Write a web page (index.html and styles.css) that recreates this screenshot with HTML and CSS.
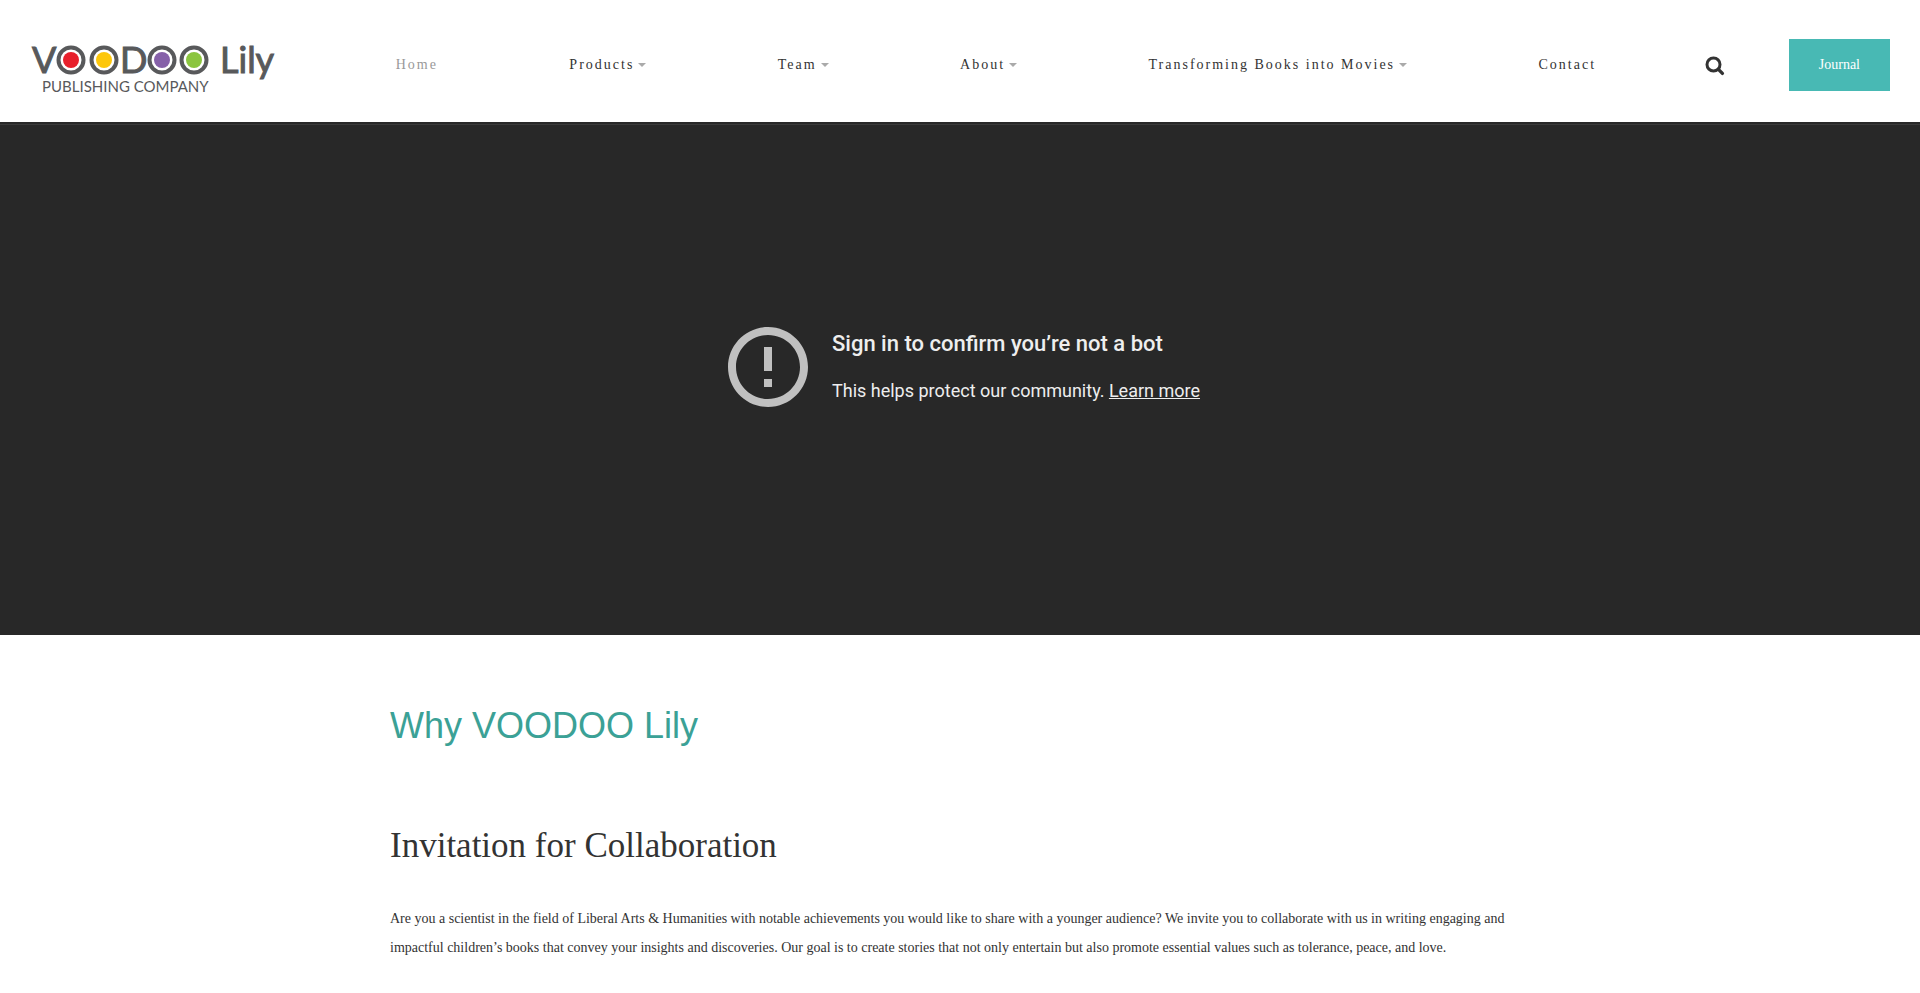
FILE: index.html
```html
<!DOCTYPE html>
<html lang="en">
<head>
<meta charset="UTF-8">
<meta name="viewport" content="width=device-width, initial-scale=1.0">
<title>VOODOO Lily Publishing Company</title>
<link rel="stylesheet" href="styles.css">
</head>
<body>
    <header class="header">
        <a class="logo" href="#" aria-label="VOODOO Lily Publishing Company">
            <svg width="246" height="52" viewBox="0 0 246 52">
                <g class="logo-name">
                    <text x="2" y="34">V</text>
                    <text x="90" y="34">D</text>
                    <text x="190" y="34">Lily</text>
                </g>
                <g fill="none" stroke="#58595b" stroke-width="4">
                    <circle cx="41" cy="21" r="12.5"/>
                    <circle cx="74" cy="21" r="12.5"/>
                    <circle cx="132" cy="21" r="12.5"/>
                    <circle cx="164" cy="21" r="12.5"/>
                </g>
                <circle cx="41" cy="21" r="8" fill="#e8202c"/>
                <circle cx="74" cy="21" r="8" fill="#fdc70c"/>
                <circle cx="132" cy="21" r="8" fill="#8661a9"/>
                <circle cx="164" cy="21" r="8" fill="#8bc53f"/>
                <text class="logo-sub" x="12" y="53">PUBLISHING COMPANY</text>
            </svg>
        </a>
        <nav class="nav">
            <a class="active" href="#">Home</a>
            <a class="has-menu" href="#">Products</a>
            <a class="has-menu" href="#">Team</a>
            <a class="has-menu" href="#">About</a>
            <a class="has-menu" href="#">Transforming Books into Movies</a>
            <a href="#">Contact</a>
        </nav>
        <button class="search" type="button" aria-label="Search">
            <svg width="20" height="20" viewBox="0 0 20 20" fill="none" stroke="#333">
                <circle cx="8.5" cy="8.5" r="6.5" stroke-width="3"/>
                <path d="M13.4 13.4L17.4 17.4" stroke-width="3.4" stroke-linecap="round"/>
            </svg>
        </button>
        <a class="journal" href="#">Journal</a>
    </header>

    <section class="video">
        <div class="message">
            <svg class="message-icon" viewBox="0 0 24 24" fill="#c0c0c0">
                <path d="M11 15h2v2h-2zm0-8h2v6h-2zm.99-5C6.47 2 2 6.48 2 12s4.47 10 9.99 10C17.52 22 22 17.52 22 12S17.52 2 11.99 2zM12 20c-4.42 0-8-3.58-8-8s3.58-8 8-8 8 3.58 8 8-3.58 8-8 8z"/>
            </svg>
            <div class="message-text">
                <div class="message-title">Sign in to confirm you’re not a bot</div>
                <div class="message-sub">This helps protect our community. <a href="#">Learn more</a></div>
            </div>
        </div>
    </section>

    <main class="container">
        <h1>Why VOODOO Lily</h1>
        <h2>Invitation for Collaboration</h2>
        <p>Are you a scientist in the field of Liberal Arts &amp; Humanities with notable achievements you would like to share with a younger audience? We invite you to collaborate with us in writing engaging and impactful children’s books that convey your insights and discoveries. Our goal is to create stories that not only entertain but also promote essential values such as tolerance, peace, and love.</p>
    </main>
</body>
</html>
```
FILE: styles.css
```css
body {
    font-family: "Liberation Serif", serif;
    font-size: 14px;
    color: #333;
    background-color: #fff;
    margin: 0;
}

.header {
    display: flex;
    align-items: center;
    padding: 39px 30px 31px;
}

.logo svg {
    display: block;
    overflow: visible;
}

.logo-name {
    font-family: Lato, sans-serif;
    font-size: 36px;
    fill: #58595b;
    stroke: #58595b;
    stroke-width: 1px;
}

.logo-sub {
    font-family: Lato, sans-serif;
    font-size: 15px;
    fill: #58595b;
}

.nav {
    flex: 1;
    display: flex;
    justify-content: space-around;
    margin-left: 54px;
}

.nav a {
    color: #333;
    letter-spacing: 2px;
    text-decoration: none;
    white-space: nowrap;
}

.nav a.active {
    color: #999;
}

.has-menu::after {
    content: "";
    display: inline-block;
    margin: 0 0 1px 4px;
    vertical-align: middle;
    border: 4px solid transparent;
    border-top-color: #aaa;
    border-bottom: 0;
}

.search {
    margin: 0 64px 0 43px;
    padding: 2px 0 0;
    background: none;
    border: none;
    cursor: pointer;
}

.search svg {
    display: block;
}

.journal {
    padding: 0 30px;
    line-height: 52px;
    color: #fff;
    background-color: #48b9b4;
    text-decoration: none;
}

.video {
    display: flex;
    justify-content: center;
    align-items: center;
    height: 513px;
    padding-bottom: 24px;
    box-sizing: border-box;
    background: linear-gradient(#282828 2px, #3a3a3a 2px, #3a3a3a 3px, #282828 3px);
    font-family: Roboto, sans-serif;
}

.message {
    display: flex;
    align-items: center;
}

.message-icon {
    width: 96px;
    height: 96px;
    margin-right: 16px;
}

.message-title {
    margin-bottom: 21px;
    font-size: 22px;
    font-weight: 500;
    line-height: 28px;
    color: #eee;
}

.message-sub {
    font-size: 18px;
    line-height: 24px;
    color: #eee;
}

.message-sub a {
    color: #eee;
}

.container {
    max-width: 1140px;
    margin: 0 auto;
    padding: 71px 20px 40px;
}

h1,
h2 {
    margin: 0;
    font-weight: normal;
    line-height: 40px;
}

h1 {
    margin-bottom: 80px;
    font-family: "Liberation Sans", sans-serif;
    font-size: 36px;
    color: #3ba196;
}

h2 {
    margin-bottom: 38px;
    font-size: 35px;
}

p {
    margin: 0;
    line-height: 29px;
}
```
